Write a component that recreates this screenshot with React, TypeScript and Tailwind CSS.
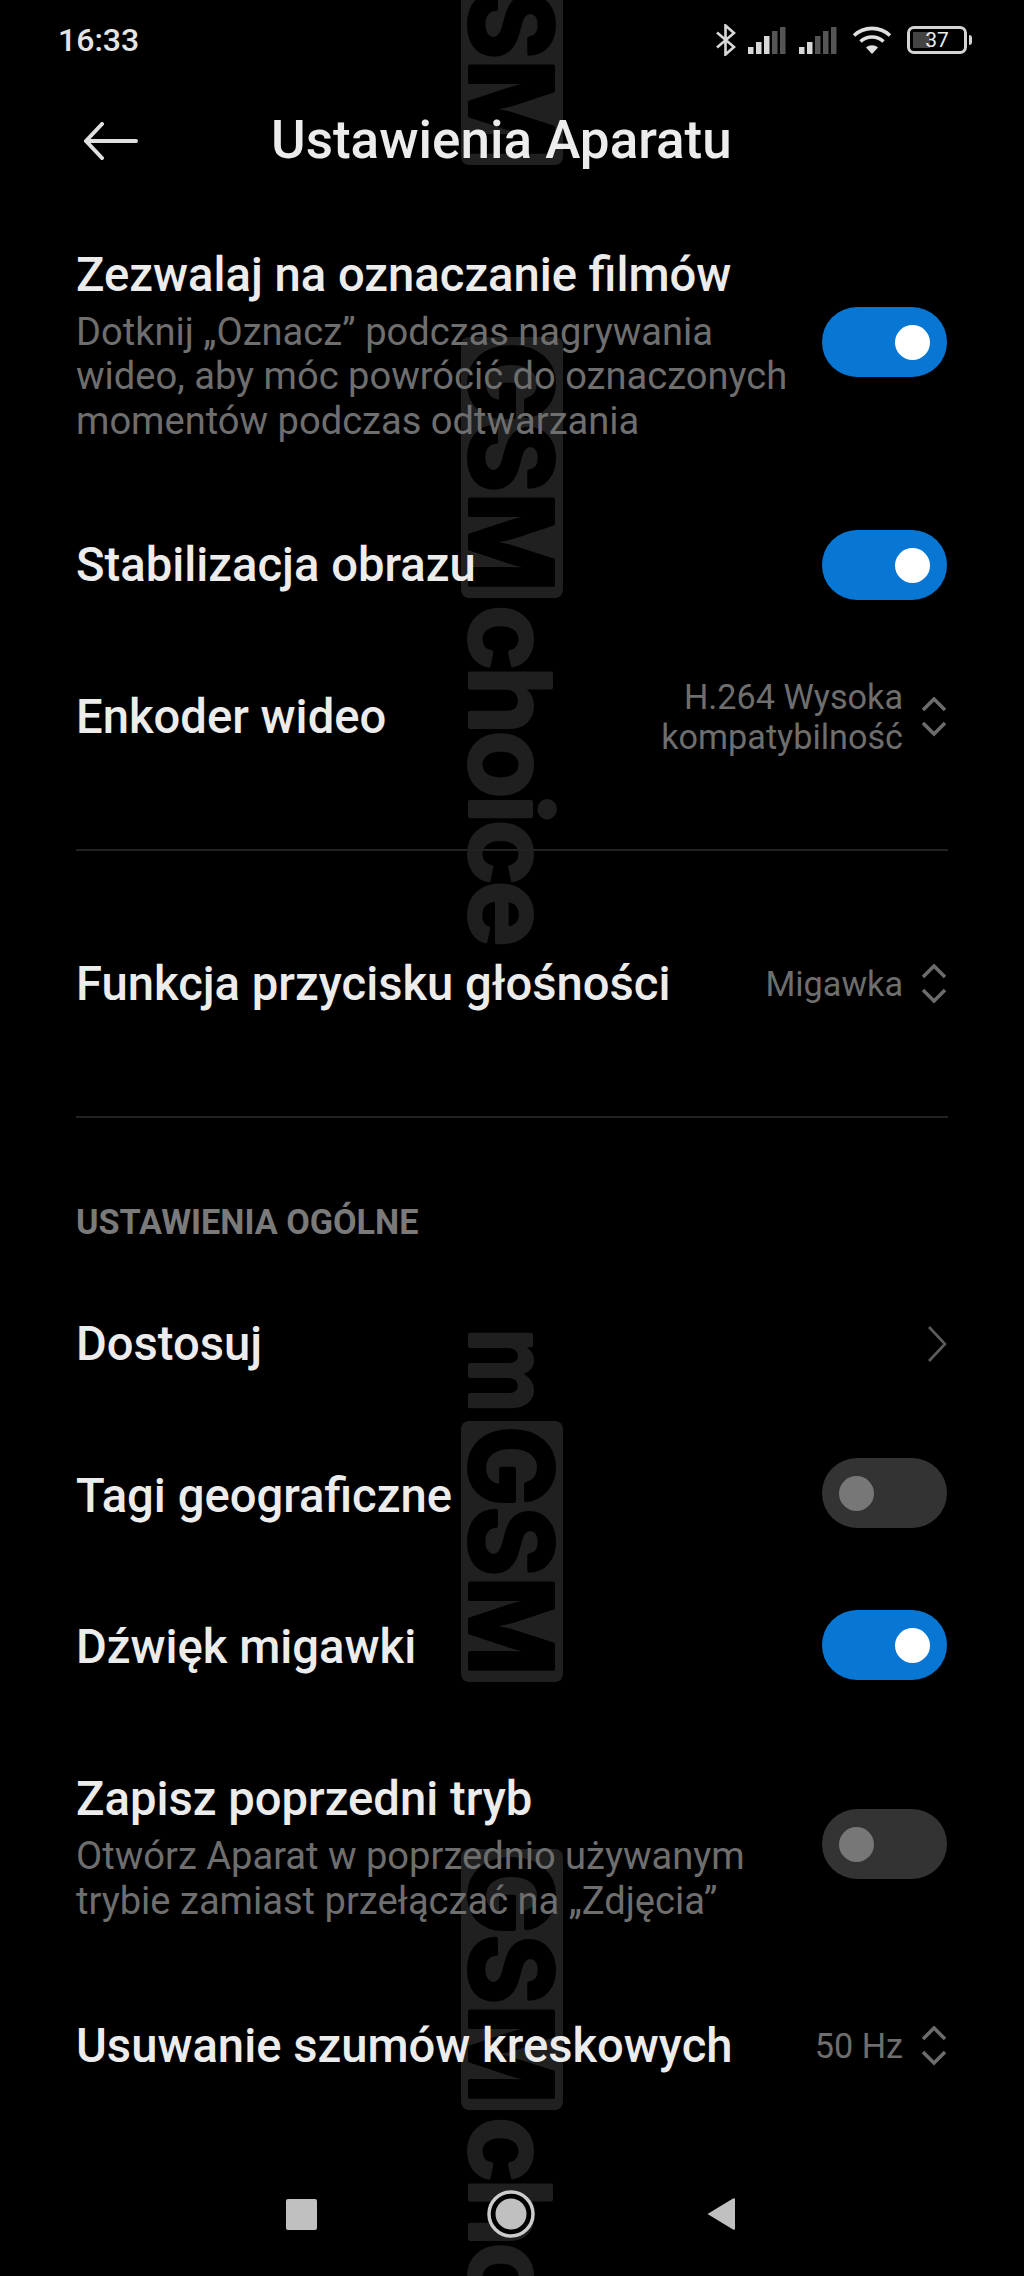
function Watermark({ top, m, choice }: { top: number; m?: boolean; choice?: boolean }) {
  return (
    <g transform={`translate(0 ${top})`}>
      {m && (
        <text
          transform="translate(30 -93) rotate(90)"
          fontFamily="Inter, sans-serif"
          fontSize="112"
          fontWeight="600"
          fill="#1f1f1f"
          stroke="#1f1f1f"
          strokeWidth="4"
          strokeLinejoin="round"
          textLength="85"
          lengthAdjust="spacingAndGlyphs"
        >
          m
        </text>
      )}
      <rect x="21" y="0" width="102" height="261" rx="8" fill="#202020" />
      <text
        transform="translate(30 5) rotate(90)"
        fontFamily="Inter, sans-serif"
        fontSize="114"
        fontWeight="700"
        fill="#000000"
        stroke="#000000"
        strokeWidth="4"
        strokeLinejoin="round"
        textLength="250"
        lengthAdjust="spacingAndGlyphs"
      >
        GSM
      </text>
      {choice && (
        <text
          transform="translate(30 268) rotate(90)"
          fontFamily="Inter, sans-serif"
          fontSize="112"
          fontWeight="600"
          fill="#1f1f1f"
          stroke="#1f1f1f"
          strokeWidth="4"
          strokeLinejoin="round"
          textLength="342"
        >
          choice
        </text>
      )}
    </g>
  );
}

function Toggle({ on, className }: { on?: boolean; className?: string }) {
  return (
    <div
      className={`${
        on
          ? 'flex h-[70px] w-[125px] shrink-0 items-center justify-end rounded-full bg-[#0877d3] pr-[17px]'
          : 'flex h-[70px] w-[125px] shrink-0 items-center justify-start rounded-full bg-[#333333] pl-[17px]'
      } ${className ?? ''}`}
    >
      <div className={on ? 'h-[35px] w-[35px] rounded-full bg-white' : 'h-[35px] w-[35px] rounded-full bg-[#777777]'} />
    </div>
  );
}

function UpDown() {
  return (
    <svg width="26" height="40" viewBox="0 0 26 40" fill="none" stroke="#6c6c6c" strokeWidth="3.5" className="ml-[18px] shrink-0">
      <path d="M2 13 13 2l11 11" />
      <path d="M2 26l11 11 11-11" />
    </svg>
  );
}

function Row({
  h,
  title,
  desc,
  textClass,
  children,
}: {
  h: string;
  title: string;
  desc?: string[];
  textClass?: string;
  children?: React.ReactNode;
}) {
  return (
    <div className={`flex items-center justify-between pr-[77px] pl-[76px] ${h}`}>
      <div className={textClass}>
        <div className="text-[47.2px] leading-[56px] font-medium text-[#ececec]">{title}</div>
        {desc && (
          <div className="mt-[7px] text-[38.1px] leading-[44.5px] text-[#6e6e6e]">
            {desc.map((line) => (
              <div key={line}>{line}</div>
            ))}
          </div>
        )}
      </div>
      {children}
    </div>
  );
}

function Value({ lines }: { lines: string[] }) {
  return (
    <div className="flex items-center">
      <div className="text-right text-[34.2px] leading-[40px] text-[#6e6e6e]">
        {lines.map((line) => (
          <div key={line}>{line}</div>
        ))}
      </div>
      <UpDown />
    </div>
  );
}

function Signal({ lit }: { lit: number }) {
  const bars = [
    { x: 0, h: 7 },
    { x: 8, h: 12 },
    { x: 16, h: 18 },
    { x: 24, h: 23 },
    { x: 32, h: 27 },
  ];
  return (
    <svg width="38" height="27" viewBox="0 0 38 27">
      {bars.map((b, i) => (
        <rect key={b.x} x={b.x} y={27 - b.h} width="5.5" height={b.h} fill={i < lit ? '#d8d8d8' : '#555555'} />
      ))}
    </svg>
  );
}

function StatusBar() {
  return (
    <div className="flex h-[80px] items-center justify-between pr-[52px] pl-[58px]">
      <span className="text-[32px] font-medium text-[#e4e4e4]">16:33</span>
      <div className="flex items-center">
        <svg width="20" height="32" viewBox="0 0 20 32" fill="none" stroke="#d8d8d8" strokeWidth="2.6">
          <path d="M1 8.5 18 23 9.5 30.5V1.5L18 9 1 23.5" />
        </svg>
        <div className="ml-[12px] flex items-center gap-[13px]">
          <Signal lit={3} />
          <Signal lit={2} />
        </div>
        <svg width="40" height="28" viewBox="0 0 40 28" fill="none" stroke="#e0e0e0" strokeWidth="3.6" className="ml-[15px]">
          <path d="M2 9.5c10-9.5 26-9.500 36 0" />
          <path d="M8.500 15.500c6.500-6 16.500-6 23 0" />
          <path d="M20 28l-6-6.500c3.300-3 8.700-3 12 0z" fill="#e0e0e0" stroke="none" />
        </svg>
        <div className="ml-[15px] flex items-center">
          <div className="relative flex h-[28px] w-[60px] items-center justify-center rounded-[7px] border-[3px] border-[#d4d4d4]">
            <div className="absolute top-[3px] bottom-[3px] left-[3px] w-[17px] bg-[#444444]" />
            <span className="relative text-[21px] leading-none text-[#ececec]">37</span>
          </div>
          <div className="ml-[2px] h-[10px] w-[3px] rounded-r-sm bg-[#d4d4d4]" />
        </div>
      </div>
    </div>
  );
}

export default function App() {
  return (
    <div className="relative h-[2276px] w-[1024px] overflow-hidden bg-black font-[Roboto,sans-serif]">
      <svg width="160" height="2276" viewBox="0 0 160 2276" className="absolute top-0 left-[440px]">
        <Watermark top={-96} />
        <Watermark top={337} choice />
        <Watermark top={1421} m />
        <Watermark top={1849} choice />
      </svg>

      <div className="relative">
        <StatusBar />

        <div className="relative flex h-[122px] items-center pl-[84px]">
          <svg width="54" height="38" viewBox="0 0 54 38" fill="none" stroke="#e0e0e0" strokeWidth="4" strokeLinecap="round">
            <path d="M52 19H3M18 2 2 19l16 17" />
          </svg>
          <span className="ml-[133px] text-[53px] font-medium text-[#ececec]">Ustawienia Aparatu</span>
        </div>

        <Row
          h="h-[280px]"
          title="Zezwalaj na oznaczanie filmów"
          textClass="mt-[6px]"
          desc={['Dotknij „Oznacz” podczas nagrywania', 'wideo, aby móc powrócić do oznaczonych', 'momentów podczas odtwarzania']}
        >
          <Toggle on />
        </Row>
        <Row h="h-[166px]" title="Stabilizacja obrazu">
          <Toggle on />
        </Row>
        <Row h="h-[138px]" title="Enkoder wideo">
          <Value lines={['H.264 Wysoka', 'kompatybilność']} />
        </Row>

        <div className="mx-[76px] mt-[63px] h-[2px] bg-[#222222]" />
        <Row h="h-[265px]" title="Funkcja przycisku głośności">
          <Value lines={['Migawka']} />
        </Row>
        <div className="mx-[76px] h-[2px] bg-[#222222]" />

        <div className="mt-[84px] px-[76px] text-[34.2px] leading-[40px] font-bold text-[#7a7a7a]">USTAWIENIA OGÓLNE</div>

        <div className="mt-[26px]">
          <Row h="h-[152px]" title="Dostosuj">
            <svg width="20" height="36" viewBox="0 0 20 36" fill="none" stroke="#5c5c5c" strokeWidth="2.600">
              <path d="M2 1l16 17L2 35" />
            </svg>
          </Row>
          <Row h="h-[152px]" title="Tagi geograficzne">
            <Toggle className="mb-[6px]" />
          </Row>
          <Row h="h-[152px]" title="Dźwięk migawki" textClass="mb-[2px]">
            <Toggle on className="mb-[6px]" />
          </Row>
          <Row
            h="h-[244px]"
            title="Zapisz poprzedni tryb"
            textClass="mt-[2px]"
            desc={['Otwórz Aparat w poprzednio używanym', 'trybie zamiast przełączać na „Zdjęcia”']}
          >
            <Toggle className="mb-[4px]" />
          </Row>
          <Row h="h-[156px]" title="Usuwanie szumów kreskowych">
            <Value lines={['50 Hz']} />
          </Row>
        </div>

        <div className="mt-[66px] flex items-center pl-[286px]">
          <div className="h-[31px] w-[31px] rounded-[2px] bg-[#c0c0c0]" />
          <svg width="48" height="48" viewBox="0 0 48 48" className="ml-[170px]">
            <circle cx="24" cy="24" r="22" fill="#000000" stroke="#cccccc" strokeWidth="3.500" />
            <circle cx="24" cy="24" r="15.500" fill="#c0c0c0" />
          </svg>
          <svg width="30" height="36" viewBox="0 0 30 36" className="ml-[171px]">
            <path d="M1.500 18 27 2.500q2-1 2 1v29q0 2-2 1z" fill="#c0c0c0" />
          </svg>
        </div>
      </div>
    </div>
  );
}
